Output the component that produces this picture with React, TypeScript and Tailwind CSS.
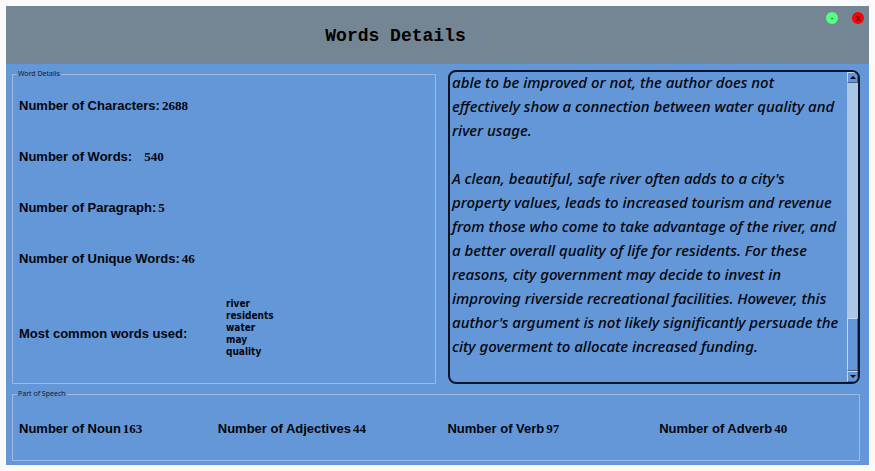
import type { ReactNode } from "react";

const essay = [
  "able to be improved or not, the author does not",
  "effectively show a connection between water quality and",
  "river usage.",
  "",
  "A clean, beautiful, safe river often adds to a city's",
  "property values, leads to increased tourism and revenue",
  "from those who come to take advantage of the river, and",
  "a better overall quality of life for residents. For these",
  "reasons, city government may decide to invest in",
  "improving riverside recreational facilities. However, this",
  "author's argument is not likely significantly persuade the",
  "city goverment to allocate increased funding.",
].join("\n");

const commonWords = ["river", "residents", "water", "may", "quality"];

function Panel({ title, className, children }: { title: string; className: string; children: ReactNode }) {
  return (
    <fieldset className="flex min-w-0 flex-col border border-[#9dbbe2] pl-1.5">
      <legend className="-ml-0.5 px-px font-['Noto_Sans',sans-serif] text-[7px] leading-[8px] font-normal text-[#101c30]">
        {title}
      </legend>
      <div className={className}>{children}</div>
    </fieldset>
  );
}

function Stat({ label, value, wide = false }: { label: string; value: number; wide?: boolean }) {
  return (
    <p className={wide ? "flex items-center gap-3" : "flex items-center gap-0.5"}>
      <span className="whitespace-nowrap">{label}</span>
      <span className="font-['Liberation_Serif',serif]">{value}</span>
    </p>
  );
}

function ArrowButton({ down = false }: { down?: boolean }) {
  return (
    <button
      type="button"
      aria-label={down ? "Scroll down" : "Scroll up"}
      className="flex h-[11px] w-full shrink-0 items-center justify-center border border-t-[#c3d8f2] border-r-[#4a5f7c] border-b-[#4a5f7c] border-l-[#c3d8f2] bg-[#6397d7]"
    >
      <svg viewBox="0 0 6 3" className="h-[3px] w-1.5" aria-hidden="true">
        <path d={down ? "M0 0h6L3 3z" : "M0 3h6L3 0z"} fill="#000" />
      </svg>
    </button>
  );
}

export default function App() {
  return (
    <div className="flex min-h-screen flex-col bg-[#fafafa] p-1.5 font-['Liberation_Sans',sans-serif] text-[13px] leading-4 text-[#02060e]">
      <header className="flex h-[58px] shrink-0 bg-[#748694]">
        <h1 className="flex flex-1 items-center justify-center pt-0.5 font-['Liberation_Mono',monospace] text-[18px] font-bold text-black">
          Words Details
        </h1>
        <div className="flex w-[84px] items-start justify-end gap-3.5 pt-1.5 pr-[5px]">
          <button
            type="button"
            aria-label="Minimize"
            className="flex size-3 items-center justify-center rounded-full bg-[#55ff7f] text-[8px] leading-none"
          >
            -
          </button>
          <button
            type="button"
            aria-label="Close"
            className="flex size-3 items-center justify-center rounded-full bg-[#ff0000] text-[7px] leading-none"
          >
            X
          </button>
        </div>
      </header>

      <main className="flex flex-1 flex-col gap-1.5 bg-[#6397d7] pt-1.5 pr-[9px] pb-1 pl-1.5 font-bold">
        <div className="grid flex-1 grid-cols-[106fr_103fr] gap-3">
          <Panel title="Word Details" className="grid flex-1 grid-rows-[51px_51px_51px_51px_1fr] pt-0.5">
            <Stat label="Number of Characters:" value={2688} />
            <Stat label="Number of Words:" value={540} wide />
            <Stat label="Number of Paragraph:" value={5} />
            <Stat label="Number of Unique Words:" value={46} />
            <div className="grid grid-cols-[207px_1fr] items-center">
              <p>Most common words used:</p>
              <ul className="pb-3 font-['DejaVu_Sans_Condensed','DejaVu_Sans',sans-serif] text-[10px] leading-3">
                {commonWords.map((word) => (
                  <li key={word}>{word}</li>
                ))}
              </ul>
            </div>
          </Panel>

          <div className="flex min-w-0 overflow-hidden rounded-lg border-2 border-[#0b1428]">
            <textarea
              readOnly
              aria-label="Essay text"
              value={essay}
              className="-mt-0.5 min-w-0 flex-1 resize-none overflow-hidden pl-0.5 font-['Noto_Sans',sans-serif] text-[15px] leading-6 font-medium whitespace-pre italic outline-none"
            />
            <div className="flex w-[11px] shrink-0 flex-col">
              <ArrowButton />
              <div className="flex-[237] bg-[#aac7ea]" />
              <div className="flex-[52] border border-t-[#c3d8f2] border-r-[#4a5f7c] border-b-[#4a5f7c] border-l-[#c3d8f2]" />
              <ArrowButton down />
            </div>
          </div>
        </div>

        <Panel
          title="Part of Speech"
          className="grid h-[62px] grid-cols-[199fr_230fr_212fr_200fr]"
        >
          <Stat label="Number of Noun" value={163} />
          <Stat label="Number of Adjectives" value={44} />
          <Stat label="Number of Verb" value={97} />
          <Stat label="Number of Adverb" value={40} />
        </Panel>
      </main>
    </div>
  );
}
